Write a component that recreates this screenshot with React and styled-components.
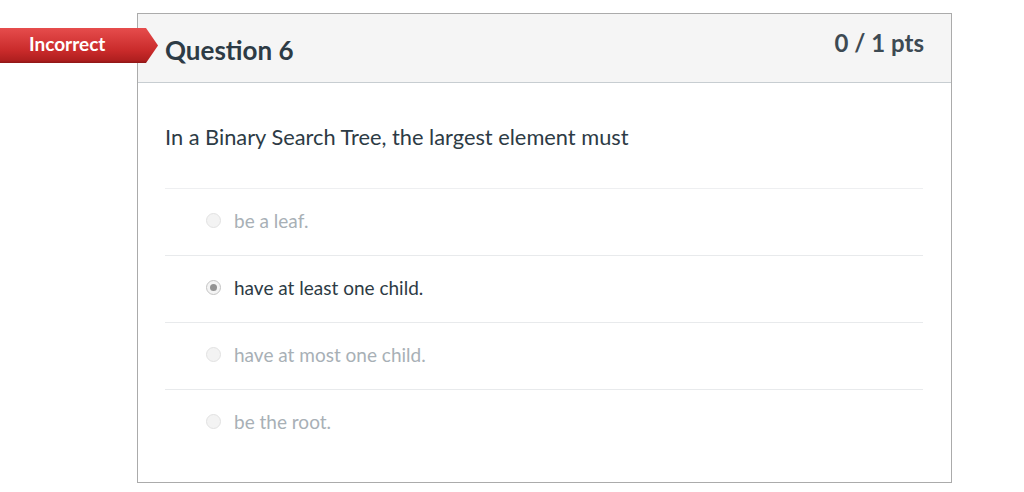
import React from "react";
import styled, { createGlobalStyle } from "styled-components";

const Global = createGlobalStyle`
  html, body { margin: 0; padding: 0; background: #fff; }
  body { font-family: Lato, "Open Sans", sans-serif; }
`;

const Page = styled.div`
  position: relative;
  padding: 13px 0 0 137px;
  width: 1024px;
  height: 492px;
  box-sizing: border-box;
`;

const Card = styled.div`
  width: 815px;
  height: 470px;
  box-sizing: border-box;
  border: 1px solid #ababab;
  display: flex;
  flex-direction: column;
`;

const Header = styled.div`
  height: 68px;
  background: #f5f5f5;
  border-bottom: 1px solid #c7cdd1;
  display: flex;
  justify-content: space-between;
  padding: 0 27px;
`;

const Title = styled.h2`
  margin: 0;
  padding-top: 21px;
  font-size: 26px;
  font-weight: 700;
  line-height: 30px;
  color: #2d3b45;
`;

const Points = styled.div`
  padding-top: 15px;
  font-size: 24px;
  font-weight: 700;
  line-height: 28px;
  color: #3d4a53;
`;

const Badge = styled.div`
  position: absolute;
  left: 0;
  top: 28px;
  height: 35px;
  width: 158px;
  display: flex;
  align-items: center;
  padding: 0 0 4px 29px;
  box-sizing: border-box;
  color: #fff;
  font-weight: 700;
  font-size: 19px;
  background: linear-gradient(#e64c4c, #c92a2a 65%, #b01f1f 92%, #8e1616);
  clip-path: polygon(0 0, 146px 0, 158px 50%, 146px 100%, 0 100%);
`;

const Body = styled.div`
  padding: 41px 28px 0 27px;
`;

const QuestionText = styled.p`
  margin: 0 0 38px;
  font-size: 21.8px;
  line-height: 26px;
  color: #2d3b45;
`;

const Answers = styled.div`
  display: flex;
  flex-direction: column;
`;

const Row = styled.label`
  border-top: 1px solid #e8eaec;
  display: flex;
  align-items: center;
  padding-left: 41px;
  gap: 13px;
  font-size: 19px;
  line-height: 22px;
  padding-bottom: 3px;
  box-sizing: border-box;
  height: 67px;
  color: ${(p) => (p.$selected ? "#2d3b45" : "#a8b0b6")};
  &:first-child { border-top-color: #eeeff1; }
`;

const Radio = styled.span`
  width: 15px;
  height: 15px;
  border-radius: 50%;
  box-sizing: border-box;
  border: 1px solid ${(p) => (p.$selected ? "#c4c4c4" : "#e2e2e2")};
  background: ${(p) => (p.$selected ? "#f4f4f4" : "#f3f3f3")};
  display: flex;
  align-items: center;
  justify-content: center;
  margin-top: -1px;
  &::after {
    content: "";
    width: 7px;
    height: 7px;
    border-radius: 50%;
    background: #939393;
    display: ${(p) => (p.$selected ? "block" : "none")};
  }
`;

const answers = [
  { text: "be a leaf.", selected: false },
  { text: "have at least one child.", selected: true },
  { text: "have at most one child.", selected: false },
  { text: "be the root.", selected: false },
];

export default function App() {
  return (
    <Page>
      <Global />
      <Badge>Incorrect</Badge>
      <Card>
        <Header>
          <Title>Question 6</Title>
          <Points>0 / 1 pts</Points>
        </Header>
        <Body>
          <QuestionText>In a Binary Search Tree, the largest element must</QuestionText>
          <Answers>
            {answers.map((a) => (
              <Row key={a.text} $selected={a.selected}>
                <Radio $selected={a.selected} />
                <span>{a.text}</span>
              </Row>
            ))}
          </Answers>
        </Body>
      </Card>
    </Page>
  );
}
